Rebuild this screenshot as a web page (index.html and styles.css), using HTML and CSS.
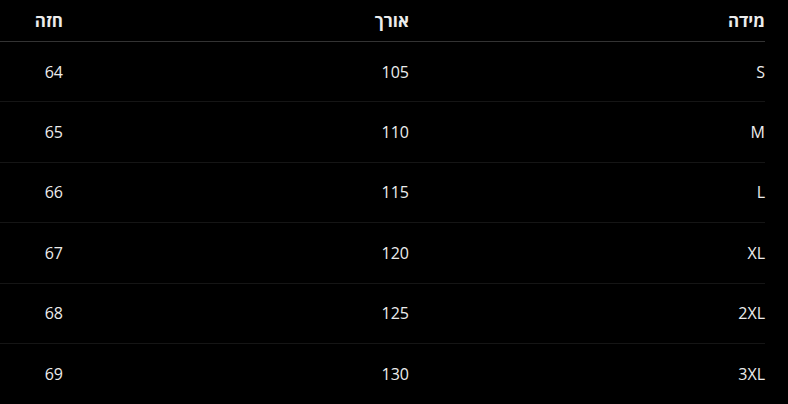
FILE: index.html
```html
<!DOCTYPE html>
<html lang="he" dir="rtl">
	<head>
		<meta charset="utf-8" />
		<title>טבלת מידות</title>
		<link rel="stylesheet" href="styles.css">
	</head>
	<body>
		<table class="sizes">
			<thead>
				<tr>
					<th class="col-size">מידה</th>
					<th class="col-length">אורך</th>
					<th class="col-chest">חזה</th>
				</tr>
			</thead>
			<tbody>
				<tr><td>S</td><td>105</td><td>64</td></tr>
				<tr><td>M</td><td>110</td><td>65</td></tr>
				<tr><td>L</td><td>115</td><td>66</td></tr>
				<tr><td>XL</td><td>120</td><td>67</td></tr>
				<tr><td>2XL</td><td>125</td><td>68</td></tr>
				<tr><td>3XL</td><td>130</td><td>69</td></tr>
			</tbody>
		</table>
	</body>
</html>
```
FILE: styles.css
```css
html,
body {
	background: #000;
	margin: 0;
	padding: 0;
}
body {
	color: #ececec;
	font-family: "Open Sans", "Liberation Sans", sans-serif;
	font-size: 16px;
}

/* Size table */
.sizes {
	border-collapse: collapse;
	margin-left: auto;
	margin-right: 23px;
	width: 765px;
}
.sizes th,
.sizes td {
	padding: 0;
	text-align: right;
	vertical-align: middle;
}
.sizes th {
	border-bottom: 1px solid #333;
	font-size: 17px;
	font-weight: 700;
	height: 41px;
}
.sizes td {
	border-bottom: 1px solid #151515;
	height: 59.4px;
}
.sizes tbody tr:last-child td { border-bottom: 0; }
.col-size { width: 356px; }
.col-length { width: 346px; }
.col-chest { width: 63px; }
```
